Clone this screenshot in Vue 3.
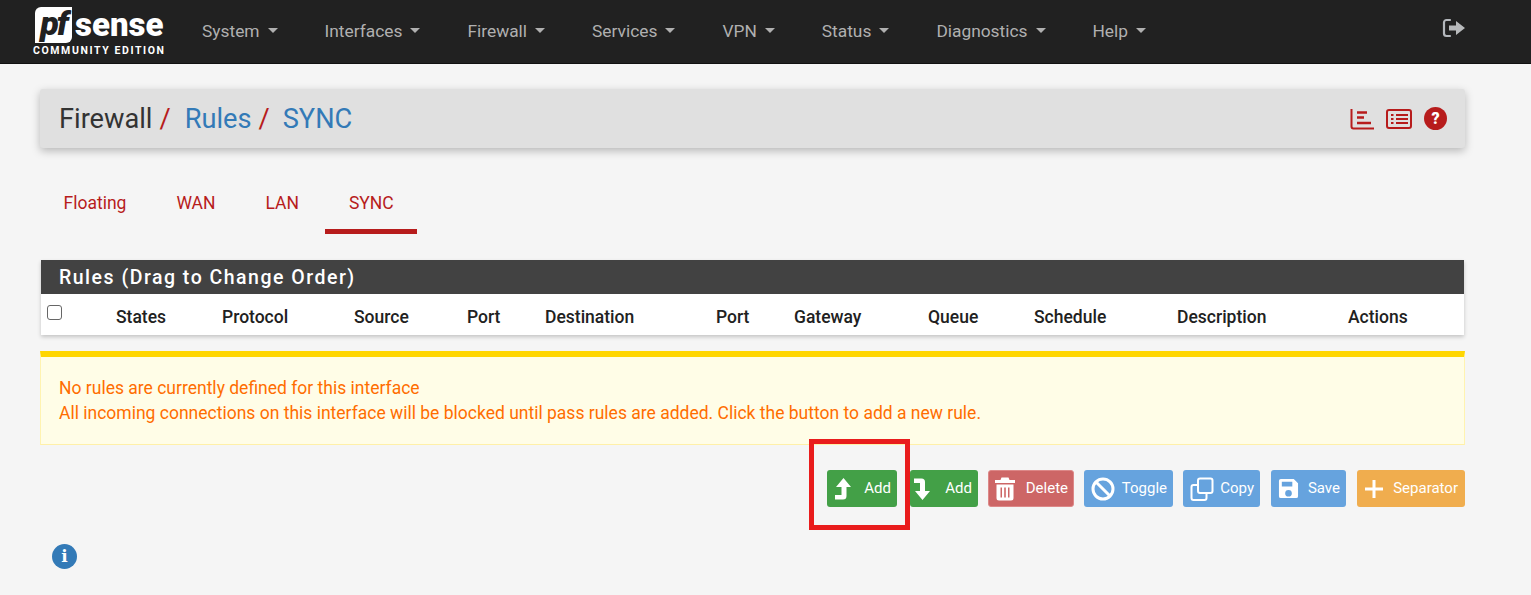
<script setup>
const navItems = ['System', 'Interfaces', 'Firewall', 'Services', 'VPN', 'Status', 'Diagnostics', 'Help']
const tabs = ['Floating', 'WAN', 'LAN', 'SYNC']
const columns = ['States', 'Protocol', 'Source', 'Port', 'Destination', 'Port', 'Gateway', 'Queue', 'Schedule', 'Description', 'Actions']
</script>

<template>
  <div class="page">
    <header class="navbar">
      <div class="brand">
        <div class="logo-row">
          <span class="pf">pf</span><span class="sense">sense</span>
        </div>
        <div class="edition">COMMUNITY EDITION</div>
      </div>
      <nav class="nav">
        <span v-for="item in navItems" :key="item" class="nav-item">{{ item }}<i class="caret"></i></span>
      </nav>
      <svg class="logout" viewBox="0 0 24 20" width="24" height="20">
        <path d="M8 2H4.500A2.500 2.500 0 0 0 2 4.500v11A2.500 2.500 0 0 0 4.500 18H8" fill="none" stroke="#b4b8bd" stroke-width="2.200" stroke-linecap="round"/>
        <path d="M7 7.500h7V3l9 7-9 7v-4.500H7z" fill="#b8babc"/>
      </svg>
    </header>

    <main class="content">
      <div class="crumbs">
        <h1 class="crumb-title">
          <span>Firewall</span><span class="slash">/</span>
          <a class="link">Rules</a><span class="slash second">/</span>
          <a class="link">SYNC</a>
        </h1>
        <div class="crumb-icons">
          <svg viewBox="0 0 24 22" width="24" height="22" fill="none" stroke="#b71c1c" stroke-width="2">
            <path d="M1.500 1v17.500a2 2 0 0 0 2 2H24"/>
            <path d="M7 4.500h10M7 9.500h7M7 15h14" stroke-width="2.400"/>
          </svg>
          <svg viewBox="0 0 26 20" width="26" height="20" fill="none" stroke="#b71c1c" stroke-width="2">
            <rect x="1" y="1" width="24" height="18" rx="2"/>
            <path d="M10 6h12M10 10h12M10 14h12M5 6h2.500M5 10h2.500M5 14h2.500"/>
          </svg>
          <span class="help">?</span>
        </div>
      </div>

      <div class="tabs">
        <a v-for="tab in tabs" :key="tab" class="tab" :class="{ active: tab === 'SYNC' }">{{ tab }}</a>
      </div>

      <section class="panel">
        <h2 class="panel-title">Rules (Drag to Change Order)</h2>
        <div class="table-head">
          <span class="check"></span>
          <span v-for="(col, i) in columns" :key="i">{{ col }}</span>
        </div>
      </section>

      <div class="alert">
        <div>No rules are currently defined for this interface</div>
        <div>All incoming connections on this interface will be blocked until pass rules are added. Click the button to add a new rule.</div>
      </div>

      <div class="actions">
        <button class="btn green add1">
          <svg viewBox="0 0 18 24" width="18" height="24" fill="#fff"><path d="M9.500 1L17 10h-4.500v9a3.500 3.500 0 0 1-3.500 3.500H1v-4.500h6.500v-8H2z"/></svg>
          <span>Add</span>
        </button>
        <button class="btn green add2">
          <svg viewBox="0 0 18 24" width="18" height="24" fill="#fff"><path d="M1 1.500h7.500A3.500 3.500 0 0 1 12 5v9h5l-7.500 9L2 14h5V6H1z"/></svg>
          <span>Add</span>
        </button>
        <button class="btn red del">
          <svg viewBox="0 0 20 24" width="20" height="24" fill="#fff"><path d="M6.500 0.500h7L14.500 3H20v3H0V3h5.500zM1.500 7.500h17V21a2.500 2.500 0 0 1-2.500 2.500H4A2.500 2.500 0 0 1 1.500 21zM5.500 10.500v10H7v-10zm3.700 0v10h1.600v-10zm3.800 0v10h1.500v-10z" fill-rule="evenodd"/></svg>
          <span>Delete</span>
        </button>
        <button class="btn blue toggle">
          <svg viewBox="0 0 24 24" width="24" height="24" fill="none" stroke="#fff" stroke-width="3"><circle cx="12" cy="12" r="10"/><path d="M5 5l14 14"/></svg>
          <span>Toggle</span>
        </button>
        <button class="btn blue copy">
          <svg viewBox="0 0 24 24" width="24" height="24" fill="none" stroke="#fff" stroke-width="2"><rect x="8" y="1.500" width="14.500" height="14.500" rx="2"/><path d="M8 8H3.500a2 2 0 0 0-2 2v11a2 2 0 0 0 2 2h11a2 2 0 0 0 2-2v-5"/></svg>
          <span>Copy</span>
        </button>
        <button class="btn blue save">
          <svg viewBox="0 0 22 22" width="21" height="21" fill="#fff"><path d="M3 1h13.500L21 5.500V19a2 2 0 0 1-2 2H3a2 2 0 0 1-2-2V3a2 2 0 0 1 2-2zm1 3v5h11V4zm7 8.500a3.500 3.500 0 1 0 0 7 3.500 3.500 0 0 0 0-7z" fill-rule="evenodd"/></svg>
          <span>Save</span>
        </button>
        <button class="btn orange sep">
          <svg viewBox="0 0 20 20" width="20" height="20" fill="#fff"><path d="M8.500 1h3v7.500H19v3h-7.500V19h-3v-7.500H1v-3h7.500z"/></svg>
          <span>Separator</span>
        </button>
      </div>

      <div class="info">i</div>
    </main>

    <div class="highlight"></div>
  </div>
</template>

<style>
html, body {
  margin: 0;
  background: #f5f5f5;
}
</style>

<style scoped>
.page {
  position: relative;
  height: 595px;
  overflow: hidden;
  background: #f5f5f5;
  font-family: Roboto, "Liberation Sans", sans-serif;
  color: #212121;
}
.navbar {
  display: flex;
  align-items: center;
  height: 63px;
  background: #212121;
  border-bottom: 1px solid #111;
  padding-left: 33px;
}
.brand {
  width: 133px;
  color: #fff;
  flex: none;
}
.logo-row {
  display: flex;
  align-items: center;
  height: 36px;
}
.pf {
  width: 37px;
  height: 36px;
  margin-left: 2px;
  background: #fff;
  color: #212121;
  border-radius: 6px 0 6px 0;
  font-size: 34px;
  font-weight: 900;
  font-style: italic;
  line-height: 33px;
  letter-spacing: -2px;
  text-align: center;
}
.sense {
  margin-left: 3px;
  font-size: 33px;
  font-weight: 900;
  letter-spacing: 0;
  line-height: 36px;
}
.edition {
  margin-top: 2px;
  font-size: 10.500px;
  font-weight: 700;
  letter-spacing: 1.600px;
  line-height: 12px;
  white-space: nowrap;
}
.nav {
  display: flex;
  margin: -2px 0 0 36px;
  gap: 47px;
}
.nav-item {
  display: inline-flex;
  align-items: center;
  color: #b0b0b0;
  font-size: 17.350px;
  white-space: nowrap;
}
.caret {
  width: 0;
  height: 0;
  margin-left: 8px;
  border-top: 5px solid #b0b0b0;
  border-left: 5px solid transparent;
  border-right: 5px solid transparent;
}
.logout {
  margin-left: auto;
  margin-right: 65px;
  margin-top: -7px;
}
.content {
  padding: 25px 66px 0 40px;
}
.crumbs {
  display: flex;
  align-items: center;
  justify-content: space-between;
  height: 59px;
  padding: 0 18px 0 19px;
  background: #e0e0e0;
  border-radius: 3px;
  box-shadow: 0 3px 8px rgba(0, 0, 0, 0.25);
}
.crumb-title {
  margin: 0;
  font-size: 27.200px;
  font-weight: 400;
  color: #333;
}
.slash {
  color: #b71c1c;
  margin: 0 14px 0 7px;
}
.slash.second {
  margin-right: 13px;
}
.link {
  color: #337ab7;
}
.crumb-icons {
  display: flex;
  align-items: center;
  gap: 12px;
}
.help {
  width: 23px;
  height: 23px;
  border-radius: 50%;
  background: #b71c1c;
  color: #fff;
  font-size: 16px;
  font-weight: 900;
  line-height: 23px;
  text-align: center;
}
.tabs {
  display: flex;
  gap: 3px;
  margin-top: 30px;
}
.tab {
  padding: 14px 23.500px 15px;
  color: #b71c1c;
  font-size: 17.500px;
  line-height: 22px;
  border-bottom: 5px solid transparent;
}
.tab.active {
  border-bottom-color: #b71c1c;
}
.panel {
  margin: 26px 1px 0;
  background: #fff;
  box-shadow: 0 2px 4px rgba(0, 0, 0, 0.2);
}
.panel-title {
  margin: 0;
  height: 34px;
  padding-left: 18px;
  background: #424242;
  color: #fff;
  font-size: 19.500px;
  font-weight: 500;
  letter-spacing: 1.500px;
  line-height: 36px;
}
.table-head {
  display: grid;
  grid-template-columns: 75px 106px 132px 113px 78px 171px 78px 134px 106px 143px 171px 1fr;
  align-items: center;
  height: 41px;
  padding-top: 5px;
  box-sizing: border-box;
  font-size: 17.500px;
  font-weight: 500;
  color: #212121;
}
.check {
  width: 13px;
  height: 13px;
  margin: -9px 0 0 6px;
  border: 1px solid #666;
  border-radius: 3px;
  background: #fff;
}
.alert {
  margin-top: 16px;
  height: 94px;
  padding: 19px 18px 0;
  background: #fffde7;
  border-top: 6px solid #ffd600;
  border-right: 1px solid #fff3b0;
  border-left: 1px solid #fff3b0;
  border-bottom: 1px solid #fff0a8;
  color: #ff6d00;
  font-size: 17.500px;
  line-height: 25px;
  box-sizing: border-box;
}
.actions {
  display: flex;
  justify-content: flex-end;
  margin-top: 25px;
}
.btn {
  display: flex;
  align-items: center;
  justify-content: space-between;
  height: 37px;
  margin: 0;
  padding: 0 6px;
  border: 1px solid transparent;
  border-radius: 3px;
  color: #fff;
  font-family: inherit;
  font-size: 15px;
  box-sizing: border-box;
}
.btn span {
  margin-top: -2px;
}
.green { background: #43a047; }
.red { background: #cd6666; border-color: #d88; }
.blue { background: #66a3de; }
.orange { background: #f0ad4e; }
.add1 { width: 70px; margin-right: 13px; padding-right: 5px; }
.add2 { width: 68px; margin-right: 10px; padding: 0 5px 0 2px; }
.del { width: 86px; margin-right: 10px; padding-right: 5px; }
.toggle { width: 89px; margin-right: 10px; padding-right: 5px; }
.copy { width: 77px; margin-right: 11px; padding-right: 5px; }
.save { width: 75px; margin-right: 11px; padding-right: 5px; }
.sep { width: 108px; }
.info {
  width: 25px;
  height: 25px;
  margin: 37px 0 0 12px;
  border-radius: 50%;
  background: #337ab7;
  color: #fff;
  font-family: "DejaVu Serif", serif;
  font-size: 17px;
  font-weight: 700;
  line-height: 25px;
  text-align: center;
}
.highlight {
  position: absolute;
  left: 809px;
  top: 439px;
  width: 91px;
  height: 81px;
  border: 5px solid #e91c1c;
}
</style>
